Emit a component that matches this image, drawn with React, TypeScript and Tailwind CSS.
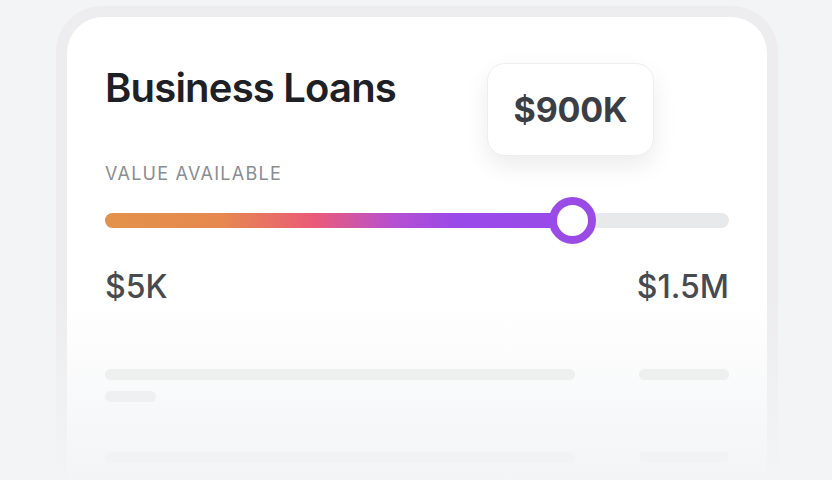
import React from "react";

export default function App() {
  return (
    <div
      className="relative w-[832px] h-[480px] overflow-hidden bg-[#f3f4f6]"
      style={{ fontFamily: "Inter, 'Noto Sans', sans-serif" }}
    >
      <div className="ml-[56px] mt-[6px] w-[722px] h-[560px] rounded-[46px] bg-[#ededef] p-[11px] pb-0">
        <div className="relative h-full rounded-[36px] bg-white pl-[38px] pr-[38px] pt-[47px]">
          <div className="text-[40px] leading-[48px] font-semibold tracking-[-0.02em] text-[#1d2024]">
            Business Loans
          </div>
          <div className="mt-[52px] text-[18px] leading-[20px] tracking-[0.07em] text-[#8a8d92]">
            VALUE AVAILABLE
          </div>
          <div className="relative mt-[29px] h-[15px] rounded-full bg-[#e8e9eb]">
            <div className="absolute left-0 top-0 h-full w-[467px] rounded-full bg-[linear-gradient(90deg,#e3924a_0%,#e6884f_25%,#ea5a79_45%,#b64fd2_62%,#9a4ae8_75%,#984be8_100%)]" />
            <div className="absolute left-[444px] top-[-16px] w-[47px] h-[47px] rounded-full border-[8px] border-[#9a4be6] bg-white" />
          </div>
          <div className="mt-[41px] flex justify-between text-[32px] leading-[36px] font-medium text-[#474a4f]">
            <span>$5K</span>
            <span>$1.5M</span>
          </div>
          <div className="mt-[64px] flex justify-between">
            <div className="w-[470px] h-[11px] rounded-full bg-[#ebebeb]" />
            <div className="w-[90px] h-[11px] rounded-full bg-[#ebebeb]" />
          </div>
          <div className="mt-[11px] w-[51px] h-[11px] rounded-full bg-[#ebebeb]" />
          <div className="mt-[50px] flex justify-between">
            <div className="w-[470px] h-[11px] rounded-full bg-[#ebebeb]" />
            <div className="w-[90px] h-[11px] rounded-full bg-[#ebebeb]" />
          </div>

          <div className="absolute left-[420px] top-[46px] w-[167px] h-[93px] rounded-[18px] bg-white border border-[#eeeeef] shadow-[0_10px_24px_rgba(0,0,0,0.08)] flex items-center justify-center">
            <span className="text-[34px] font-bold tracking-[-0.005em] text-[#3b3e45]">$900K</span>
          </div>
        </div>
      </div>
      <div className="absolute left-0 right-0 top-[300px] bottom-0 bg-[linear-gradient(180deg,rgba(243,244,246,0)_0%,rgba(243,244,246,0.45)_45%,rgba(243,244,246,0.97)_100%)] pointer-events-none" />
    </div>
  );
}
